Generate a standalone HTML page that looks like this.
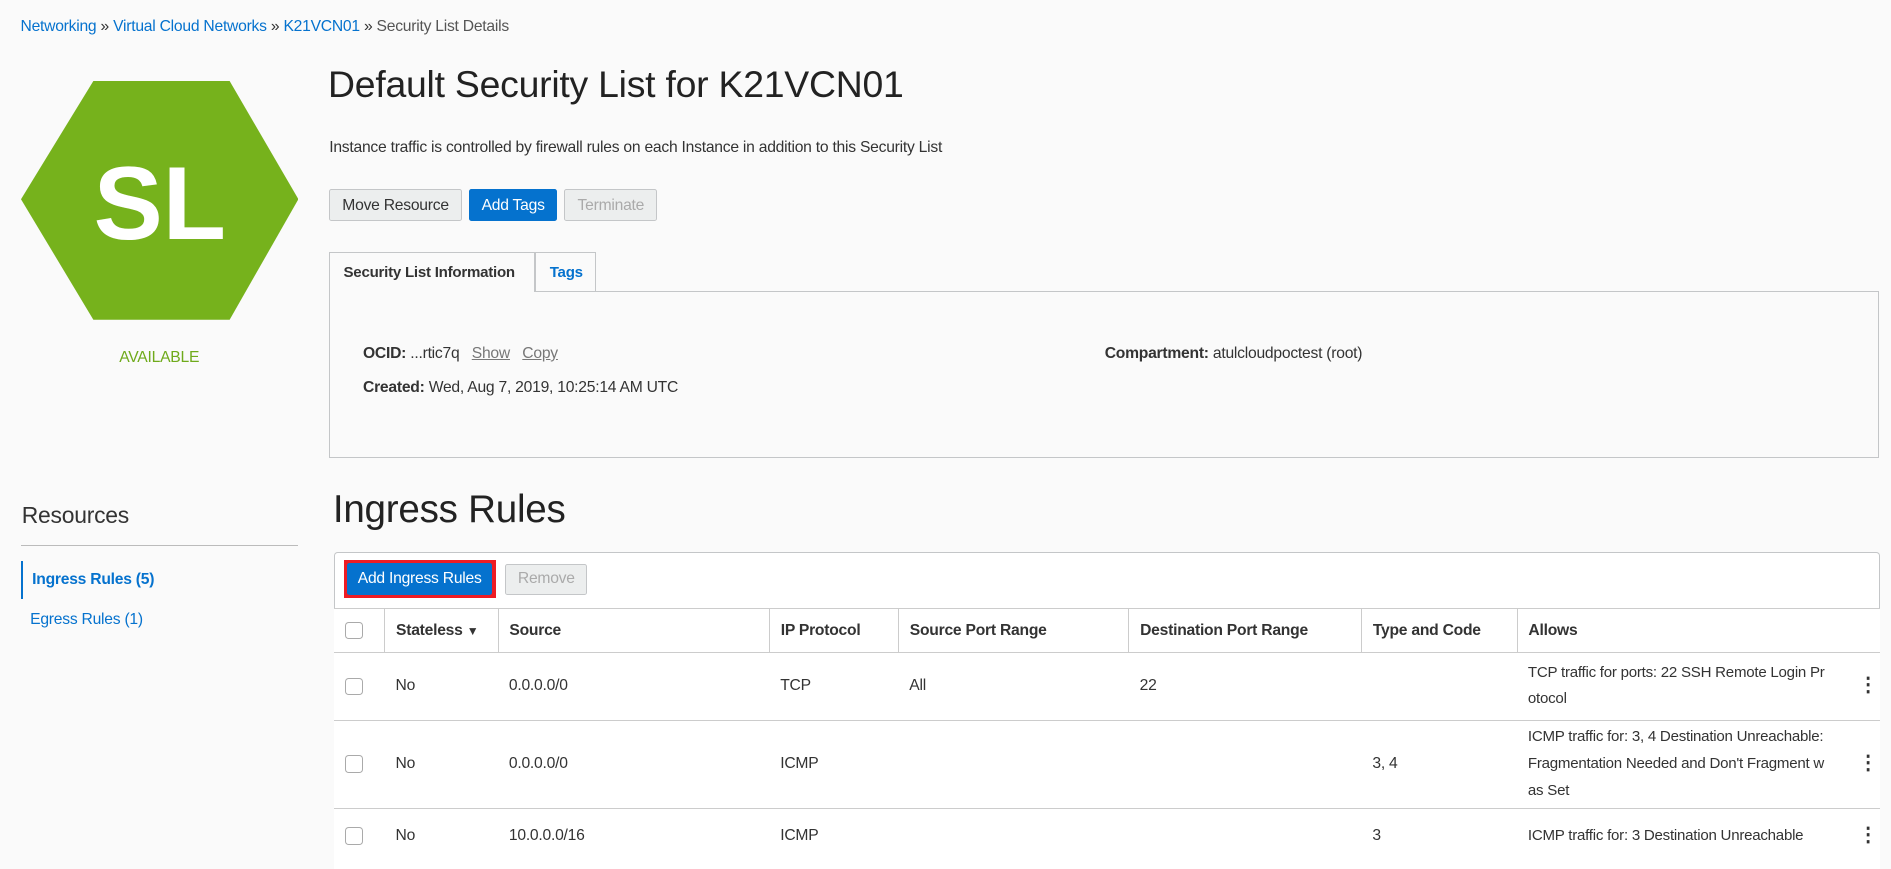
<!DOCTYPE html>
<html><head><meta charset="utf-8"><style>
html{zoom:1.2060}
body{margin:0;width:1568px;height:689px;background:#fafafa;font-family:"Liberation Sans",Arial,sans-serif;color:#333;font-size:13px;position:relative;overflow:hidden;letter-spacing:-0.2px}
.a{position:absolute;white-space:nowrap}
a{color:#0572ce;text-decoration:none}
.btn{position:absolute;height:26px;line-height:26px;border:1px solid #c4c6c8;border-radius:2px;background:#eceeee;color:#333;text-align:center;box-sizing:border-box;font-size:13px}
.blue{background:#0572ce;border-color:#0572ce;color:#fff}
.dis{color:#aaa}
table{border-collapse:collapse;position:absolute;left:277px;top:504px;width:1282px;background:#fff;font-size:13px;table-layout:fixed}
td,th{border-top:1px solid #ccc;padding:0 9px;text-align:left;vertical-align:middle;white-space:nowrap;overflow:visible}
th{height:36px;border-left:1px solid #ccc;font-weight:bold;color:#333}
th:first-child{border-left:none}
.cb{display:inline-block;width:13px;height:13px;border:1px solid #aaa;border-radius:3px;background:#fff;vertical-align:middle}
.keb{position:absolute;left:283px;font-weight:bold;font-size:16px}
.r3 td{vertical-align:top;padding-top:15px}
</style></head><body>
<div class="a" style="left:17px;top:15px"><a>Networking</a> » <a>Virtual Cloud Networks</a> » <a>K21VCN01</a> » <span style="color:#555">Security List Details</span></div>
<svg class="a" style="left:17px;top:67px" width="230" height="198"><polygon points="60,0 173,0 230,98 173,198 60,198 0,98" fill="#76b21c"/><text x="115" y="131" text-anchor="middle" font-family="Liberation Sans" font-weight="bold" font-size="86" fill="#fff">SL</text></svg>
<div class="a" style="left:17px;width:230px;text-align:center;top:289px;color:#6faa1b">AVAILABLE</div>
<div class="a" style="left:272px;top:52px;font-size:31px;color:#222">Default Security List for K21VCN01</div>
<div class="a" style="left:273px;top:115px">Instance traffic is controlled by firewall rules on each Instance in addition to this Security List</div>
<div class="btn" style="left:273px;top:157px;width:110px">Move Resource</div>
<div class="btn blue" style="left:389px;top:157px;width:73px">Add Tags</div>
<div class="btn dis" style="left:468px;top:157px;width:77px">Terminate</div>
<div class="a" style="left:273px;top:241px;width:1285px;height:139px;border:1px solid #c4c6c8;box-sizing:border-box"></div>
<div class="a" style="left:273px;top:209px;width:171px;height:33px;border:1px solid #c4c6c8;border-bottom:none;background:#fafafa;box-sizing:border-box;font-weight:bold;font-size:12.5px;padding:9px 0 0 11px">Security List Information</div>
<div class="a" style="left:444px;top:209px;width:50px;height:32px;border:1px solid #c4c6c8;border-bottom:none;box-sizing:border-box;font-weight:bold;color:#0572ce;font-size:12.5px;padding:9px 0 0 11px">Tags</div>
<div class="a" style="left:301px;top:286px"><b>OCID:</b> ...rtic7q &nbsp;&nbsp;<u style="color:#777">Show</u> &nbsp;&nbsp;<u style="color:#777">Copy</u></div>
<div class="a" style="left:301px;top:314px"><b>Created:</b> Wed, Aug 7, 2019, 10:25:14 AM UTC</div>
<div class="a" style="left:916px;top:286px"><b>Compartment:</b> atulcloudpoctest (root)</div>
<div class="a" style="left:18px;top:416px;font-size:19px;color:#333">Resources</div>
<div class="a" style="left:17px;top:452px;width:230px;border-top:1px solid #bbb"></div>
<div class="a" style="left:17px;top:465px;height:32px;border-left:2px solid #0572ce;padding-left:8px;line-height:32px;font-weight:bold;color:#0572ce">Ingress Rules (5)</div>
<div class="a" style="left:25px;top:507px;color:#0572ce">Egress Rules (1)</div>
<div class="a" style="left:276px;top:405px;font-size:32px;color:#222">Ingress Rules</div>
<div class="a" style="left:277px;top:458px;width:1282px;height:240px;border:1px solid #c4c6c8;border-radius:3px;background:#fff;box-sizing:border-box"></div>
<div class="a" style="left:285px;top:464px;width:126px;height:32px;background:#ee1c24"></div>
<div class="btn blue" style="left:288px;top:467px;width:120px;height:26px;border:none">Add Ingress Rules</div>
<div class="btn dis" style="left:419px;top:468px;width:68px;height:25px;line-height:24px">Remove</div>
<table>
<colgroup><col style="width:42px"><col style="width:94px"><col style="width:225px"><col style="width:107px"><col style="width:191px"><col style="width:193px"><col style="width:129px"><col></colgroup>
<tr><th><span class="cb"></span></th><th>Stateless <span style="font-size:10px">▼</span></th><th>Source</th><th>IP Protocol</th><th>Source Port Range</th><th>Destination Port Range</th><th>Type and Code</th><th>Allows</th></tr>
<tr style="height:56px"><td><span class="cb"></span></td><td>No</td><td>0.0.0.0/0</td><td>TCP</td><td>All</td><td>22</td><td></td><td style="position:relative;line-height:22px;font-size:12.5px">TCP traffic for ports: 22 SSH Remote Login Pr<br>otocol<span class="keb" style="top:16px">⋮</span></td></tr>
<tr style="height:73px"><td><span class="cb"></span></td><td>No</td><td>0.0.0.0/0</td><td>ICMP</td><td></td><td></td><td>3, 4</td><td style="position:relative;line-height:22px;font-size:12.5px">ICMP traffic for: 3, 4 Destination Unreachable:<br>Fragmentation Needed and Don't Fragment w<br>as Set<span class="keb" style="top:25px">⋮</span></td></tr>
<tr class="r3" style="height:50px"><td><span class="cb"></span></td><td>No</td><td>10.0.0.0/16</td><td>ICMP</td><td></td><td></td><td>3</td><td style="position:relative;font-size:12.5px">ICMP traffic for: 3 Destination Unreachable<span class="keb" style="top:12px">⋮</span></td></tr>
</table>
</body></html>
